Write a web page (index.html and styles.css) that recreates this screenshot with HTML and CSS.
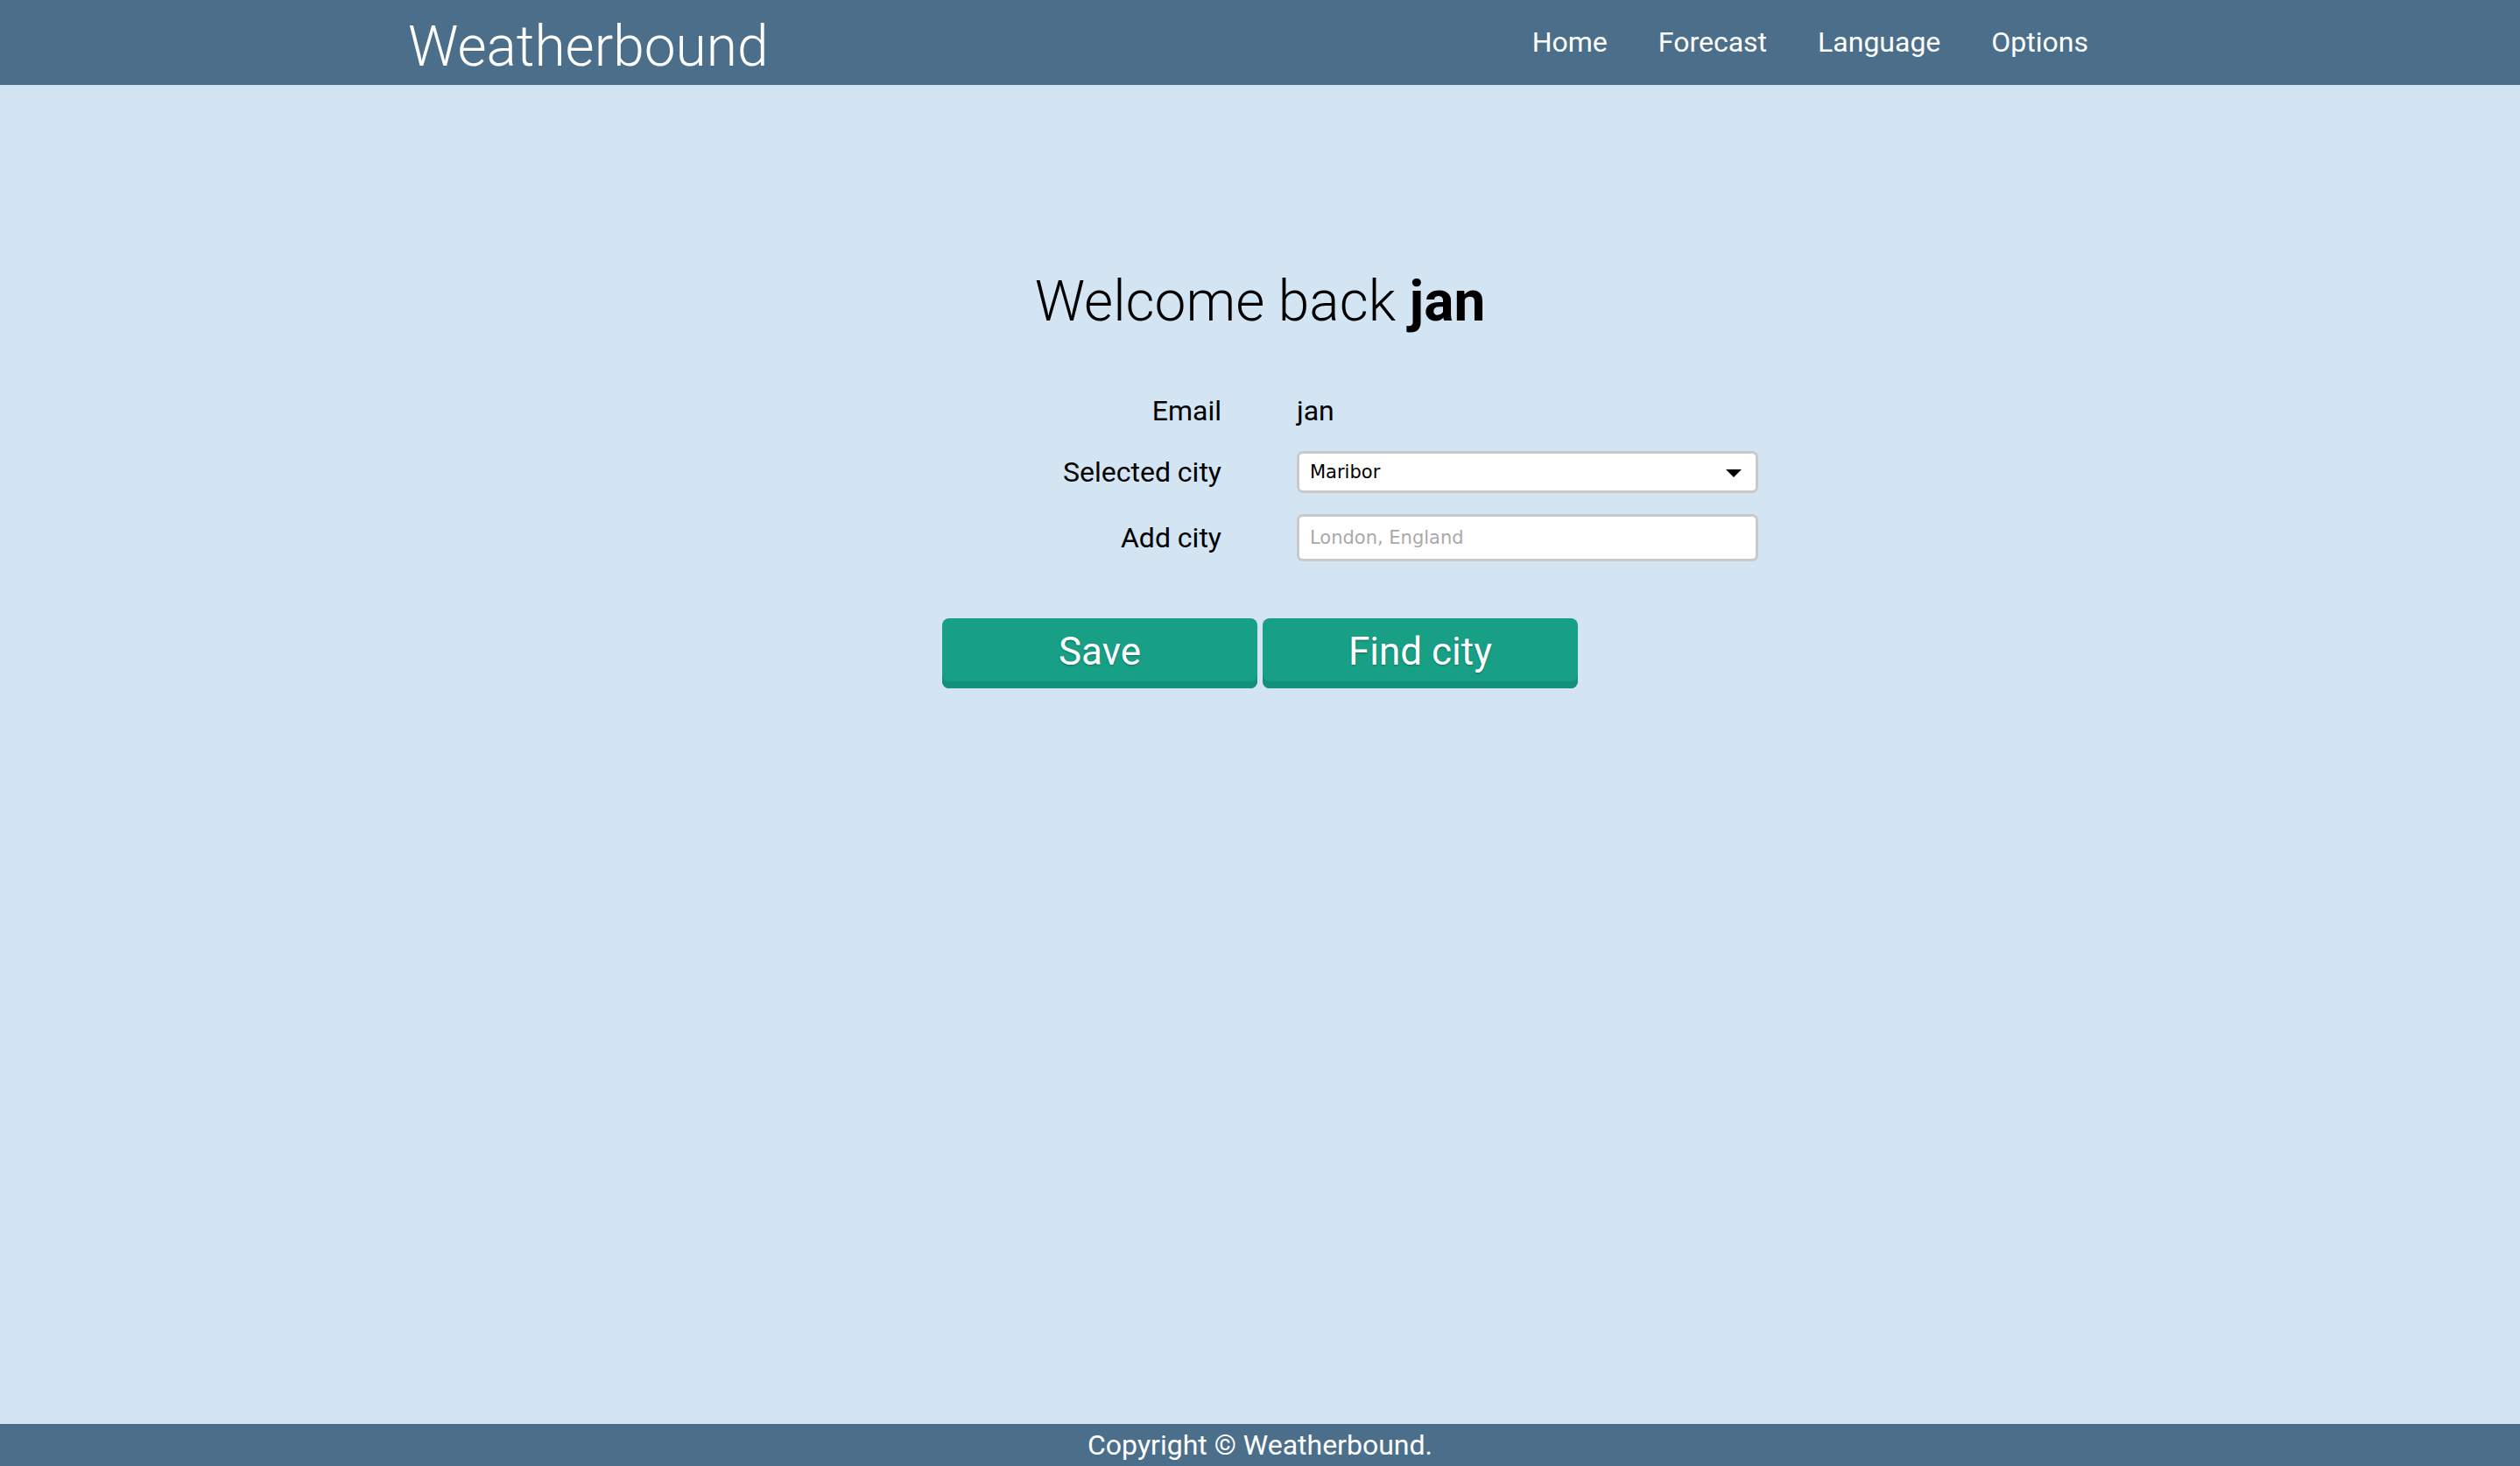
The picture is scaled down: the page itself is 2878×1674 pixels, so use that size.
FILE: index.html
```html
<!DOCTYPE html>
<html lang="en">
<head>
<meta charset="utf-8">
<title>Weatherbound</title>
<link rel="stylesheet" href="styles.css">
</head>
<body>
<header class="topbar">
  <div class="topbar-inner">
    <a class="logo" href="#">Weatherbound</a>
    <nav class="nav">
      <a class="nav-link" href="#">Home</a>
      <a class="nav-link" href="#">Forecast</a>
      <a class="nav-link" href="#">Language</a>
      <a class="nav-link" href="#">Options</a>
    </nav>
  </div>
</header>
<main class="main">
  <h1 class="welcome">Welcome back <strong class="welcome-name">jan</strong></h1>
  <form class="profile-form">
    <div class="form-grid">
      <label class="form-label">Email</label>
      <div class="form-value">jan</div>
      <label class="form-label" for="city">Selected city</label>
      <div class="select-wrap">
        <select id="city" class="select">
          <option>Maribor</option>
        </select>
        <svg class="select-arrow" width="18" height="9" viewBox="0 0 18 9"><path d="M0 0H18L9 9Z" fill="#000"/></svg>
      </div>
      <label class="form-label" for="add">Add city</label>
      <div class="input-wrap">
        <input id="add" class="text-input" type="text" placeholder="London, England">
      </div>
    </div>
    <div class="actions">
      <button class="btn" type="button">Save</button>
      <button class="btn" type="button">Find city</button>
    </div>
  </form>
</main>
<footer class="footer">Copyright © Weatherbound.</footer>
</body>
</html>
```
FILE: styles.css
```css
* { box-sizing: border-box; }
html, body { height: 100%; }
body {
  margin: 0;
  min-height: 100vh;
  display: flex;
  flex-direction: column;
  background: #d3e5f3;
  font-family: Roboto, "Liberation Sans", sans-serif;
  color: #000;
}
.topbar {
  height: 97px;
  background: #4b6f8b;
  flex: none;
}
.topbar-inner {
  width: 1950px;
  margin: 0 auto;
  height: 97px;
  display: flex;
  justify-content: space-between;
  align-items: flex-start;
}
.logo {
  display: block;
  color: #fff;
  text-decoration: none;
  font-weight: 300;
  font-size: 64px;
  line-height: 86px;
  padding-top: 11px;
  padding-left: 2px;
}
.nav {
  display: flex;
}
.nav-link {
  color: #fff;
  text-decoration: none;
  font-size: 32px;
  line-height: 97px;
  padding: 0 29px;
}
.main {
  flex: 1;
  display: flex;
  flex-direction: column;
  align-items: center;
}
.welcome {
  margin: 210px 0 0;
  font-weight: 300;
  font-size: 64px;
  line-height: 75px;
  text-align: center;
}
.welcome-name { font-weight: 700; }
.profile-form {
  display: flex;
  flex-direction: column;
  align-items: center;
  margin-top: 64px;
}
.form-grid {
  display: grid;
  grid-template-columns: 525px 527px;
  grid-template-rows: 45px 48px 54px;
  column-gap: 86px;
  row-gap: 24px;
  align-items: center;
}
.form-label {
  text-align: right;
  font-size: 32px;
  line-height: 38px;
}
.form-value {
  font-size: 32px;
  line-height: 38px;
}
.select-wrap { position: relative; height: 48px; }
.select {
  appearance: none;
  -webkit-appearance: none;
  width: 100%;
  height: 48px;
  background: #fff;
  border: 3px solid #c9c9c9;
  border-radius: 7px;
  padding: 0 40px 0 12px;
  font-family: "DejaVu Sans", Verdana, sans-serif;
  font-size: 21px;
  color: #000;
  outline: none;
}
.select-arrow {
  position: absolute;
  right: 19px;
  top: 21px;
  pointer-events: none;
}
.input-wrap { height: 54px; }
.text-input {
  width: 100%;
  height: 54px;
  background: #fff;
  border: 3px solid #c9c9c9;
  border-radius: 7px;
  padding: 0 12px;
  font-family: "DejaVu Sans", Verdana, sans-serif;
  font-size: 21px;
  color: #000;
  outline: none;
}
.text-input::placeholder { color: #a9a9a9; }
.actions {
  display: flex;
  gap: 6px;
  margin-top: 65px;
}
.btn {
  width: 360px;
  height: 80px;
  border: none;
  border-radius: 8px;
  background: #17a085;
  box-shadow: inset 0 -8px 0 #14917a;
  color: #fff;
  font-family: Roboto, "Liberation Sans", sans-serif;
  font-size: 44px;
  line-height: 72px;
  padding: 2px 0 6px;
  text-shadow: 0 1px 2px rgba(0,0,0,0.3);
  cursor: pointer;
}
.footer {
  flex: none;
  height: 48px;
  background: #4b6f8b;
  color: #fff;
  text-align: center;
  font-size: 32px;
  line-height: 48px;
}
```
